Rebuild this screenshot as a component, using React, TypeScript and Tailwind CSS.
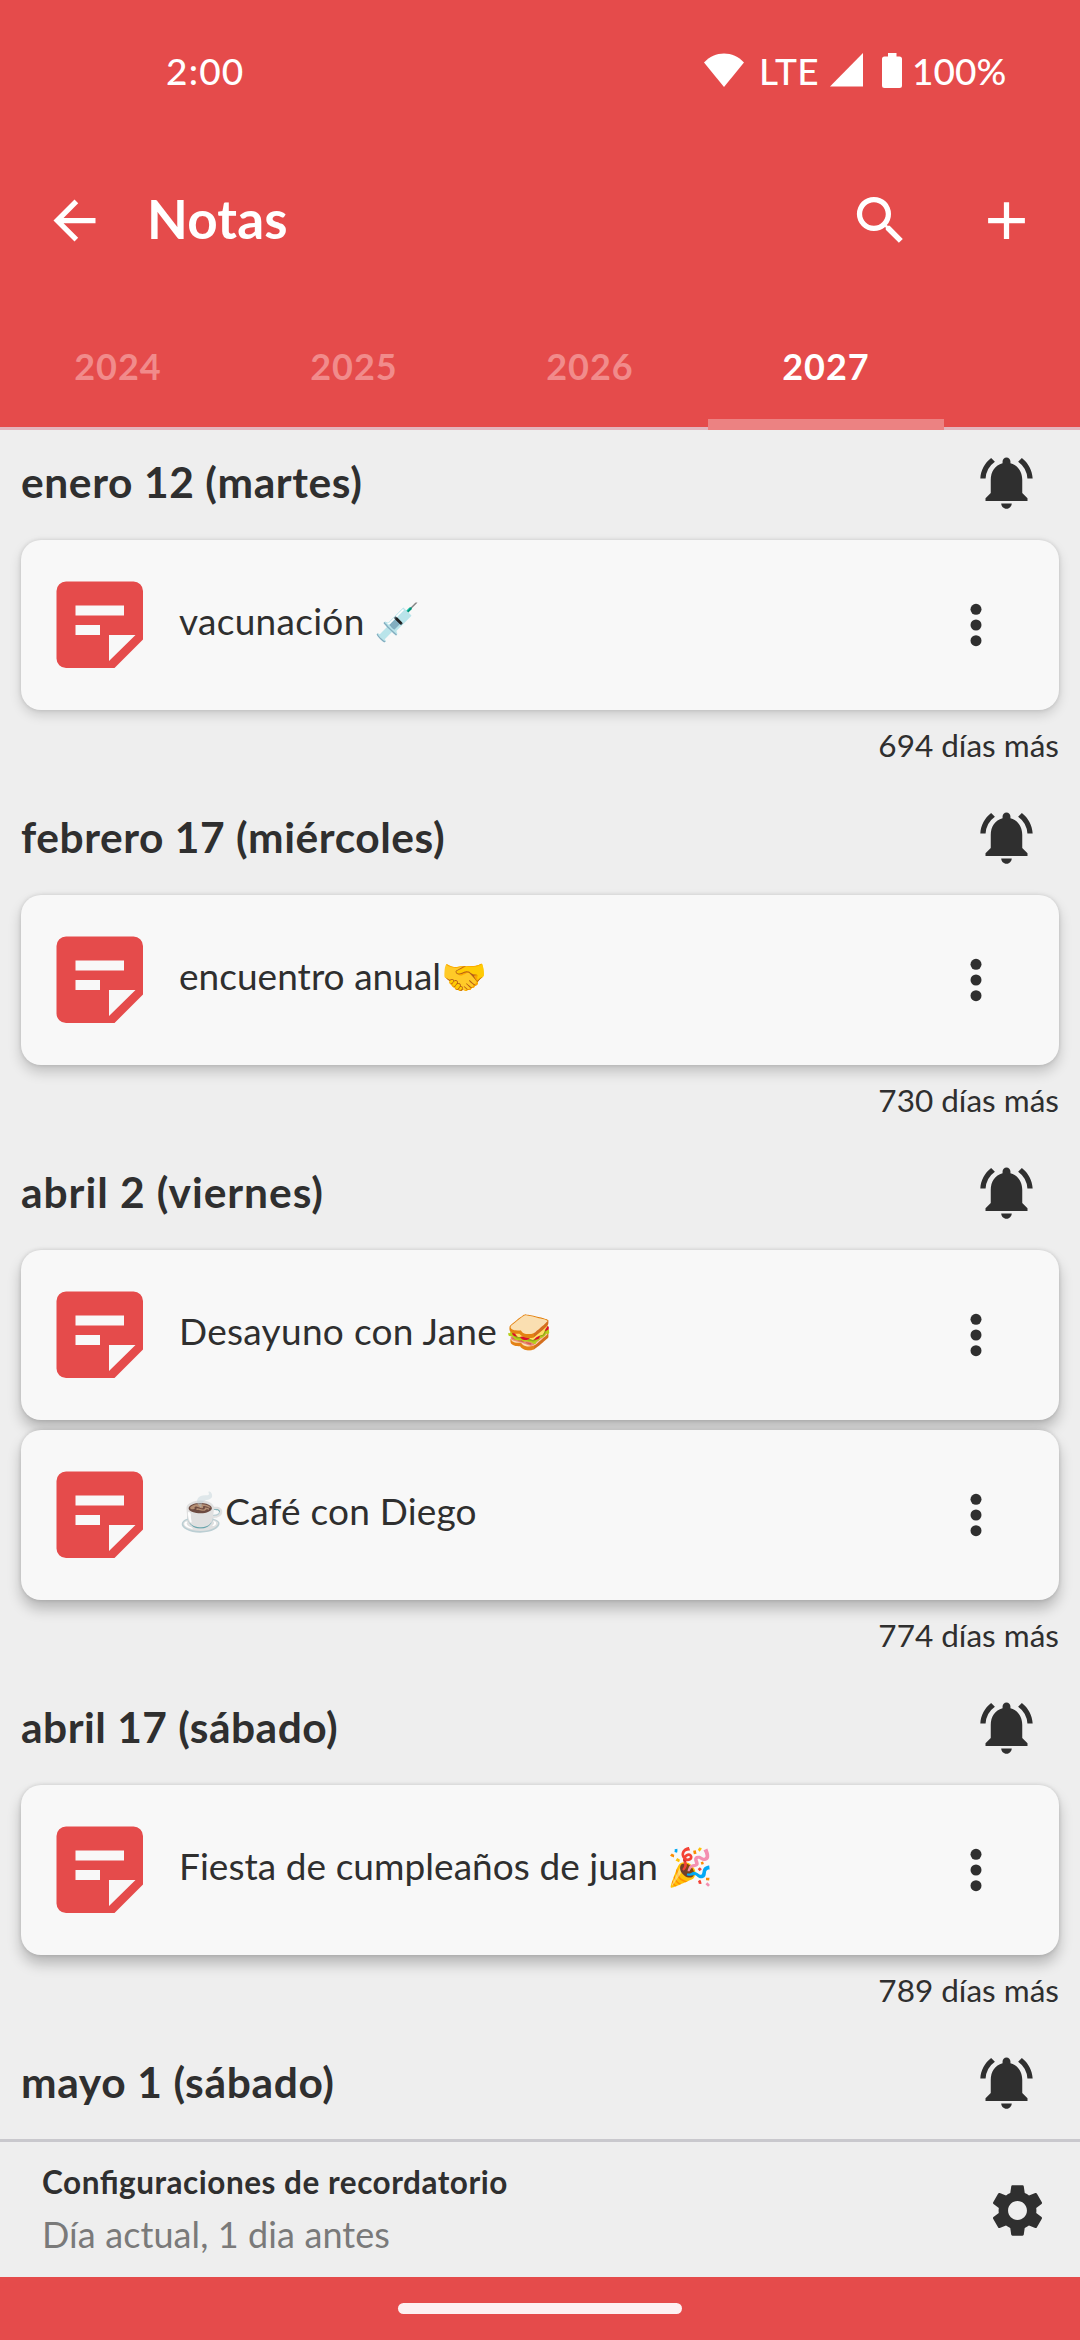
import React from "react";
import { MdArrowBack, MdSearch, MdAdd, MdNotificationsActive, MdSettings } from "react-icons/md";

type Note = { text: string; tracking: string };
type Group = { date: string; tracking: string; notes: Note[]; days?: string; shadow: string };

const softShadow = "shadow-[0_5px_12px_rgba(0,0,0,0.15),0_0_4px_rgba(0,0,0,0.12)]";
const midShadow = "shadow-[0_7px_13px_rgba(0,0,0,0.19),0_0_4px_rgba(0,0,0,0.13)]";
const deepShadow = "shadow-[0_9px_14px_rgba(0,0,0,0.23),0_0_4px_rgba(0,0,0,0.14)]";

const groups: Group[] = [
  {
    date: "enero 12 (martes)",
    tracking: "tracking-[0.6px]",
    notes: [{ text: "vacunación 💉", tracking: "tracking-[0.3px]" }],
    days: "694 días más",
    shadow: softShadow,
  },
  {
    date: "febrero 17 (miércoles)",
    tracking: "tracking-[0.55px]",
    notes: [{ text: "encuentro anual🤝", tracking: "tracking-[0.03px]" }],
    days: "730 días más",
    shadow: midShadow,
  },
  {
    date: "abril 2 (viernes)",
    tracking: "tracking-[0.95px]",
    notes: [
      { text: "Desayuno con Jane 🥪", tracking: "tracking-[0.3px]" },
      { text: "☕Café con Diego", tracking: "tracking-[0.2px]" },
    ],
    days: "774 días más",
    shadow: deepShadow,
  },
  {
    date: "abril 17 (sábado)",
    tracking: "tracking-[0.5px]",
    notes: [{ text: "Fiesta de cumpleaños de juan 🎉", tracking: "tracking-[0.05px]" }],
    days: "789 días más",
    shadow: deepShadow,
  },
  { date: "mayo 1 (sábado)", tracking: "tracking-[0.65px]", notes: [], shadow: deepShadow },
];

const tabs = ["2024", "2025", "2026", "2027"];

function NoteIcon() {
  return (
    <svg className="h-[88px] w-[88px] shrink-0 fill-[#e54b4b]" viewBox="0 0 88 88">
      <path
        fillRule="evenodd"
        d="M10 .5H77.500A9.500 9.500 0 0 1 87 10V58.500L58.500 87H10A9.500 9.500 0 0 1 .5 77.500V10A9.500 9.500 0 0 1 10 .5ZM19.500 24.500V34.500H68V24.500ZM19.500 44V54H44V44ZM53 54V80L79.500 54Z"
      />
    </svg>
  );
}

function Dots() {
  return (
    <svg className="h-[44px] w-[12px] fill-[#2f2f2f]" viewBox="0 0 12 44">
      <circle cx="6" cy="6.300" r="5.500" />
      <circle cx="6" cy="22" r="5.500" />
      <circle cx="6" cy="37.700" r="5.500" />
    </svg>
  );
}

function NoteCard({ note, shadow }: { note: Note; shadow: string }) {
  return (
    <div className={`relative flex h-[170px] items-center rounded-[20px] bg-[#f8f8f8] pr-[77px] pl-[35px] ${shadow}`}>
      <NoteIcon />
      <span className={`mb-[8px] ml-[35px] grow text-[37px] leading-[44px] whitespace-nowrap ${note.tracking}`}>
        {note.text}
      </span>
      <Dots />
    </div>
  );
}

function DayGroup({ group }: { group: Group }) {
  return (
    <section className="shrink-0 px-[21px]">
      <div className="flex h-[110px] items-center justify-between pb-[6px]">
        <h2 className={`text-[42.5px] leading-[50px] font-bold whitespace-nowrap ${group.tracking}`}>{group.date}</h2>
        <MdNotificationsActive className="mr-[21px] size-[63px]" />
      </div>
      <div className="flex flex-col gap-[10px]">
        {group.notes.map((n) => (
          <NoteCard key={n.text} note={n} shadow={group.shadow} />
        ))}
      </div>
      {group.days && (
        <div className="flex h-[75px] items-center justify-end pb-[6px] text-[31.5px] leading-[38px]">{group.days}</div>
      )}
    </section>
  );
}

function StatusBar() {
  return (
    <div className="flex h-[140px] items-center justify-between pr-[74px] pl-[166px] text-[37px] leading-none font-medium">
      <span className="tracking-[1.2px]">2:00</span>
      <div className="flex items-center">
        <svg className="h-[34px] w-[40px] fill-white" viewBox="0 0 40 34">
          <path d="M20 34 0 9.500C5.500 3.500 12.500.5 20 .5S34.500 3.500 40 9.500Z" />
        </svg>
        <span className="ml-[15px] w-[62px] tracking-[0.3px]">LTE</span>
        <svg className="ml-[9px] h-[34px] w-[33px] fill-white" viewBox="0 0 33 34">
          <path d="M33 0V33.500H0Z" />
        </svg>
        <svg className="ml-[19px] h-[35px] w-[20px] fill-white" viewBox="0 0 20 35">
          <path d="M6 0H14.500V3.500H17.500A2.500 2.500 0 0 1 20 6V32.500A2.500 2.500 0 0 1 17.500 35H2.500A2.500 2.500 0 0 1 0 32.500V6A2.500 2.500 0 0 1 2.500 3.500H6Z" />
        </svg>
        <span className="ml-[10px] w-[94px] whitespace-nowrap">100%</span>
      </div>
    </div>
  );
}

export default function App() {
  return (
    <div className="flex h-[2340px] w-[1080px] flex-col overflow-hidden bg-[#eeeeee] font-['Lato','Noto_Color_Emoji',sans-serif] text-[#2f2f2f]">
      <header className="shrink-0 bg-[#e54b4b] text-white">
        <StatusBar />
        <div className="flex h-[160px] items-center pr-[42px] pl-[43px]">
          <MdArrowBack className="size-[63px]" />
          <h1 className="mb-[2px] ml-[41px] grow text-[53px] leading-[64px] font-bold tracking-[0.2px]">Notas</h1>
          <MdSearch className="size-[63px]" />
          <MdAdd className="ml-[63px] size-[63px]" />
        </div>
        <nav className="relative flex h-[130px] border-b-[3px] border-[#e3b5bd]">
          {tabs.map((t) => {
            const active = t === "2027";
            return (
              <div
                key={t}
                className={`relative flex h-[130px] w-[236px] items-center justify-center pt-[2px] text-[36px] font-bold tracking-[1px] ${active ? "text-white" : "text-[#f18b8b]"}`}
              >
                {t}
                {active && <span className="absolute inset-x-0 bottom-0 h-[11px] bg-[#ec8282]" />}
              </div>
            );
          })}
        </nav>
      </header>
      <main className="flex min-h-0 grow flex-col overflow-hidden">
        {groups.map((g) => (
          <DayGroup key={g.date} group={g} />
        ))}
      </main>
      <footer className="shrink-0">
        <div className="flex h-[138px] items-center justify-between border-t-[3px] border-[#c9c8cd] pr-[31px] pl-[42px]">
          <div className="mb-[4px] flex flex-col gap-[8px]">
            <span className="text-[31.5px] leading-[44px] font-bold tracking-[0.52px] [font-feature-settings:'liga']">
              Configuraciones de recordatorio
            </span>
            <span className="text-[36px] leading-[44px] tracking-[0.1px] text-[#7a7a7a]">Día actual, 1 dia antes</span>
          </div>
          <MdSettings className="mt-[2px] size-[63px]" />
        </div>
        <div className="flex h-[63px] items-center justify-center bg-[#e54b4b]">
          <span className="h-[11px] w-[284px] rounded-full bg-[#fdf0f2]" />
        </div>
      </footer>
    </div>
  );
}
